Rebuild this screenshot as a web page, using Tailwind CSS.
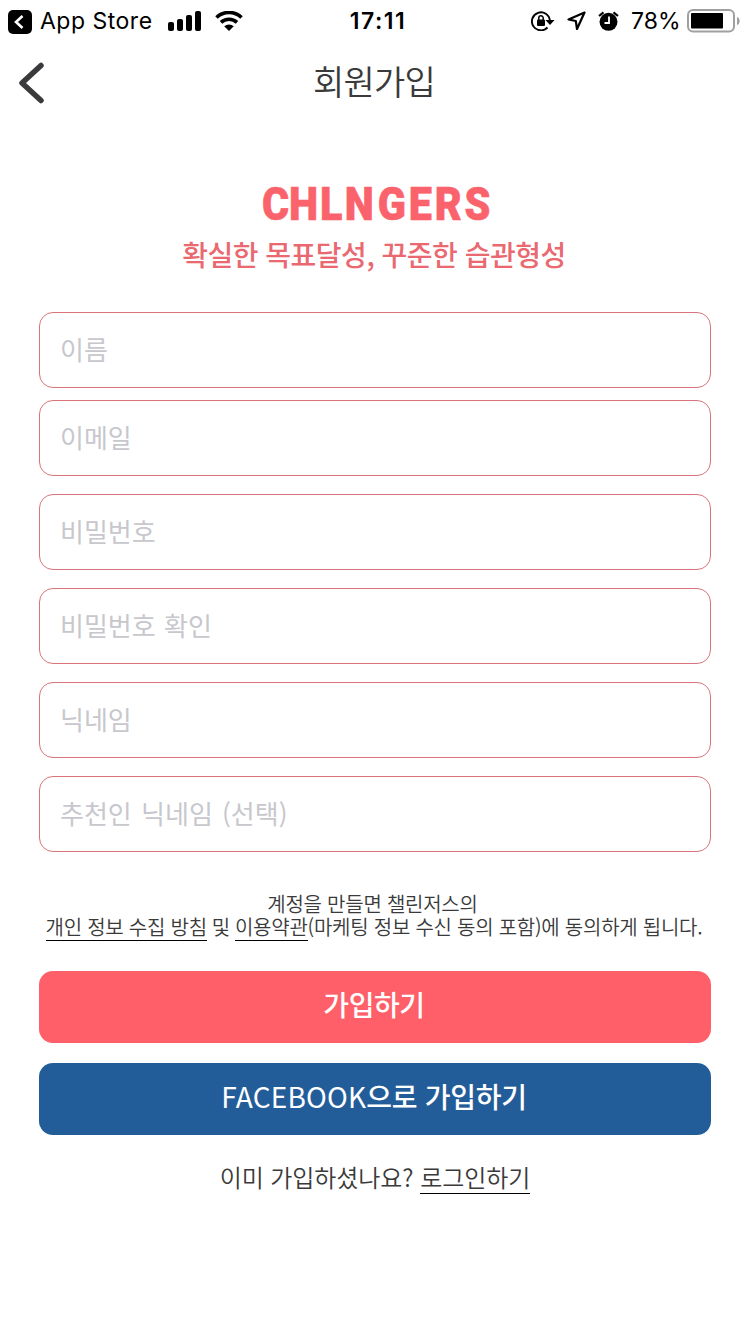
<!doctype html>
<html lang="ko">
<head>
  <meta charset="UTF-8">
  <meta name="viewport" content="width=device-width, initial-scale=1.0">
  <title>회원가입</title>
  <script src="https://cdn.jsdelivr.net/npm/@tailwindcss/browser@4"></script>
</head>
<body class="bg-white">
  <div class="w-[750px] h-[1334px] overflow-hidden bg-white text-[#3a3a3a] font-['Noto_Sans_CJK_KR',sans-serif]">

    <!-- Status bar -->
    <div class="grid grid-cols-3 h-10 items-center pl-2 pr-2.5 text-black font-['Inter',sans-serif] text-[23px] leading-10">
      <div class="flex items-center h-10">
        <svg class="w-6 h-6 mt-0.5" viewBox="0 0 24 24">
          <rect width="24" height="24" rx="5" fill="#000"/>
          <path d="M14.500 6 8 12l6.500 6" fill="none" stroke="#fff" stroke-width="2.600"/>
        </svg>
        <span class="ml-2 w-32 pt-px tracking-[0.5px] whitespace-nowrap">App Store</span>
        <svg class="w-[34px] h-5" viewBox="0 0 34 20">
          <rect x="0" y="11" width="6" height="9" rx="2"/>
          <rect x="9" y="8" width="6" height="12" rx="2"/>
          <rect x="18" y="4" width="6" height="16" rx="2"/>
          <rect x="27" y="0" width="6" height="20" rx="2"/>
        </svg>
        <svg class="ml-[13px] w-7 h-5" viewBox="0 0 28 20">
          <path d="M1.500 6.500a18 18 0 0 1 25 0M6 11.400a11.600 11.600 0 0 1 16 0" fill="none" stroke="#000" stroke-width="3.600"/>
          <path d="M9.200 15.300a7 7 0 0 1 9.600 0L14 20z"/>
        </svg>
      </div>
      <div class="pt-px pl-2 text-center font-semibold tracking-[1.5px]">17:11</div>
      <div class="flex items-center justify-end h-10">
        <svg class="w-6 h-5" viewBox="0 0 24 20">
          <path d="M16.500 16.500A9 9 0 1 1 18.900 9.500" fill="none" stroke="#000" stroke-width="1.900"/>
          <path d="M14.500 9H23.500l-4.500 5z"/>
          <rect x="6" y="8.500" width="8" height="6.500" rx="1"/>
          <path d="M7.800 9V7a2.200 2.200 0 0 1 4.400 0v2" fill="none" stroke="#000" stroke-width="1.500"/>
        </svg>
        <svg class="ml-3 w-[19px] h-[19px]" viewBox="0 0 19 19">
          <path d="M17.500 1.500 1.500 8.400l7.300 1.600 1.200 8z" fill="none" stroke="#000" stroke-width="2.200" stroke-linejoin="round"/>
        </svg>
        <svg class="ml-3 w-[21px] h-5" viewBox="0 0 21 20">
          <circle cx="10.500" cy="10.800" r="9"/>
          <path d="M1 5 5.500 1.300M20 5l-4.500-3.700" stroke="#000" stroke-width="2.200"/>
          <path d="M11 5.500v6.500H6.500" fill="none" stroke="#fff" stroke-width="1.800"/>
        </svg>
        <span class="ml-3 w-14 pt-px whitespace-nowrap">78%</span>
        <svg class="w-[53px] h-6" viewBox="0 0 53 24">
          <rect x="1" y="1" width="46" height="21.500" rx="5" fill="none" stroke="#a0a0a0" stroke-width="2"/>
          <rect x="4" y="4" width="32" height="15.500" rx="1"/>
          <path d="M50 8c3.500 1 3.500 7 0 8z" fill="#a0a0a0"/>
        </svg>
      </div>
    </div>

    <!-- Header -->
    <header class="grid grid-cols-[60px_1fr_60px] items-center h-[86px] text-[34px] font-[350]">
      <svg class="ml-[18px] w-7 h-[42px]" viewBox="0 0 28 42">
        <path d="M23 3.500 4 21l19 17.500" fill="none" stroke="#3a3a3c" stroke-width="5.500" stroke-linecap="round" stroke-linejoin="round"/>
      </svg>
      <h1 class="pb-1.5 pr-0.5 text-center tracking-[-0.8px]">회원가입</h1>
    </header>

    <main class="px-[39px] flex flex-col">
      <!-- Logo -->
      <svg class="mt-[42px] mx-auto w-[270px] h-[62px]" viewBox="0 0 270 62">
        <text transform="scale(.9 1)" x="24.400 54.500 89 116.500 153 187.500 216.500 249.500" y="52.500" class="font-['Roboto',sans-serif] font-black text-[46px]" fill="#fb636c" stroke="#fb636c" stroke-width=".6">CHLNGERS</text>
      </svg>
      <p class="mt-1 h-10 pr-0.5 leading-10 text-center text-[28px] font-medium tracking-[-0.5px] text-[#ea6870]">확실한 목표달성, 꾸준한 습관형성</p>

      <!-- Form -->
      <form class="mt-[38px] flex flex-col gap-[18px] text-[26px]">
        <div class="flex flex-col gap-3">
          <input type="text" placeholder="이름" class="h-[76px] px-5 pb-1 border border-[#d9747c] rounded-[14px] placeholder:text-[#c7c7cd]">
          <input type="text" placeholder="이메일" class="h-[76px] px-5 pb-1 border border-[#d9747c] rounded-[14px] placeholder:text-[#c7c7cd]">
        </div>
        <input type="password" placeholder="비밀번호" class="h-[76px] px-5 pb-1 border border-[#d9747c] rounded-[14px] placeholder:text-[#c7c7cd]">
        <input type="password" placeholder="비밀번호 확인" class="h-[76px] px-5 pb-1 border border-[#d9747c] rounded-[14px] placeholder:text-[#c7c7cd] [word-spacing:1px]">
        <input type="text" placeholder="닉네임" class="h-[76px] px-5 pb-1 border border-[#d9747c] rounded-[14px] placeholder:text-[#c7c7cd]">
        <input type="text" placeholder="추천인 닉네임 (선택)" class="h-[76px] px-5 pb-1 border border-[#d9747c] rounded-[14px] placeholder:text-[#c7c7cd] [word-spacing:2px]">
      </form>

      <!-- Terms -->
      <div class="mt-10 flex flex-col items-center text-xl leading-6 font-[350] tracking-[-0.25px] whitespace-nowrap">
        <p class="h-6 pr-[5px]">계정을 만들면 챌린저스의</p>
        <p class="flex h-[25px] -mt-px pb-px pr-0.5"><a class="h-[26px] border-b border-black">개인 정보 수집 방침</a><span class="mx-[5px]">및</span><a class="h-[26px] border-b border-black">이용약관</a>(마케팅 정보 수신 동의 포함)에 동의하게 됩니다.</p>
      </div>

      <button class="mt-[31px] h-[72px] pb-1.5 pr-0.5 rounded-[14px] bg-[#ff5f69] text-white text-[28px] font-medium tracking-[-0.4px]">가입하기</button>
      <button class="mt-5 h-[72px] pb-1.5 pr-0.5 rounded-[14px] bg-[#235d99] text-white text-[28px] font-medium tracking-[-0.3px]"><span class="font-normal tracking-[0.2px]">FACEBOOK</span>으로 가입하기</button>

      <p class="mt-[27px] flex justify-center gap-[7px] text-2xl leading-8 font-[350] tracking-[-0.1px]"><span class="-mt-px">이미 가입하셨나요?</span><a class="h-8 leading-[30px] border-b border-black">로그인하기</a></p>
    </main>
  </div>
</body>
</html>
